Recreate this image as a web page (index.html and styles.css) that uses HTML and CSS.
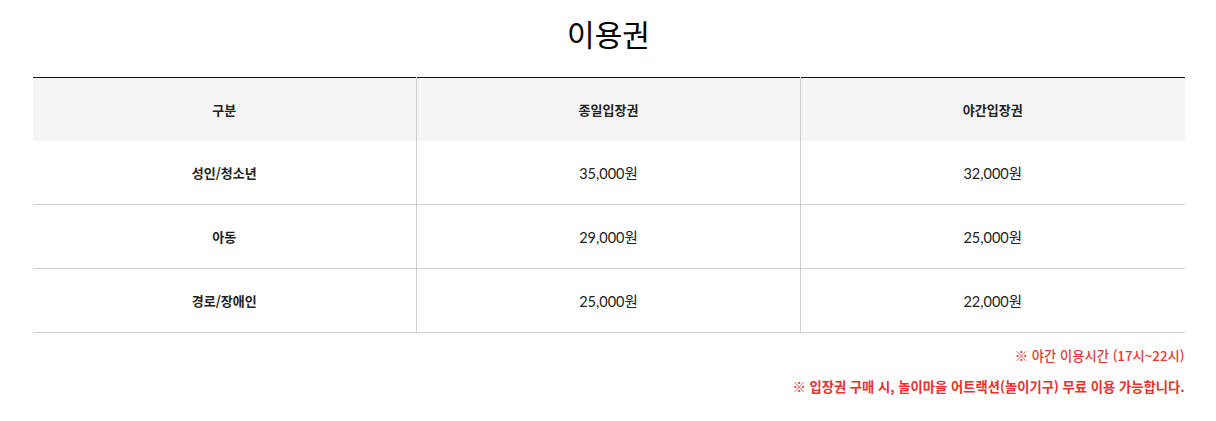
FILE: index.html
```html
<!DOCTYPE html>
<html lang="ko">
<head>
<meta charset="utf-8">
<title>이용권</title>
<link rel="stylesheet" href="styles.css">
</head>
<body>
<div class="wrap">
  <h2 class="title">이용권</h2>
  <table class="price">
    <thead>
      <tr><th>구분</th><th>종일입장권</th><th>야간입장권</th></tr>
    </thead>
    <tbody>
      <tr><th>성인/청소년</th><td>35,000원</td><td>32,000원</td></tr>
      <tr><th>아동</th><td>29,000원</td><td>25,000원</td></tr>
      <tr><th>경로/장애인</th><td>25,000원</td><td>22,000원</td></tr>
    </tbody>
  </table>
  <div class="notes">
    <p>※ 야간 이용시간 (17시~22시)</p>
    <p class="strong">※ 입장권 구매 시, 놀이마을 어트랙션(놀이기구) 무료 이용 가능합니다.</p>
  </div>
</div>
</body>
</html>
```

FILE: styles.css
```css
html, body {
  margin: 0;
  padding: 0;
  background: #fff;
}
body {
  font-family: "Noto Sans CJK KR", "Noto Sans", sans-serif;
  color: #111;
}
.wrap {
  width: 1152px;
  margin: 0 auto;
  padding-left: 1px;
}
.title {
  margin: 0;
  padding-top: 13px;
  height: 40px;
  line-height: 40px;
  font-size: 30px;
  font-weight: 400;
  text-align: center;
  color: #000;
  margin-bottom: 24px;
}
.price {
  width: 1152px;
  border-collapse: collapse;
  table-layout: fixed;
  border-top: 1px solid #111;
}
.price th, .price td {
  text-align: center;
  vertical-align: middle;
  padding: 0;
  font-size: 13px;
}
.price th {
  font-weight: 700;
  color: #222;
}
.price thead th {
  height: 63px;
  background: #f5f5f5;
}
.price tbody th, .price tbody td {
  height: 63px;
  border-bottom: 1px solid #cfcfcf;
}
.price th + th, .price th + td, .price td + td {
  border-left: 1px solid #cfcfcf;
}
.price td {
  font-family: "Lato", "Noto Sans CJK KR", sans-serif;
  font-size: 14.5px;
  color: #222;
}
.notes {
  padding-top: 7px;
  text-align: right;
}
.notes p {
  margin: 0;
  line-height: 31px;
  font-size: 13.3px;
  font-weight: 500;
  color: #e5393a;
}
.notes p.strong {
  font-weight: 700;
  color: #e8302c;
}
```
